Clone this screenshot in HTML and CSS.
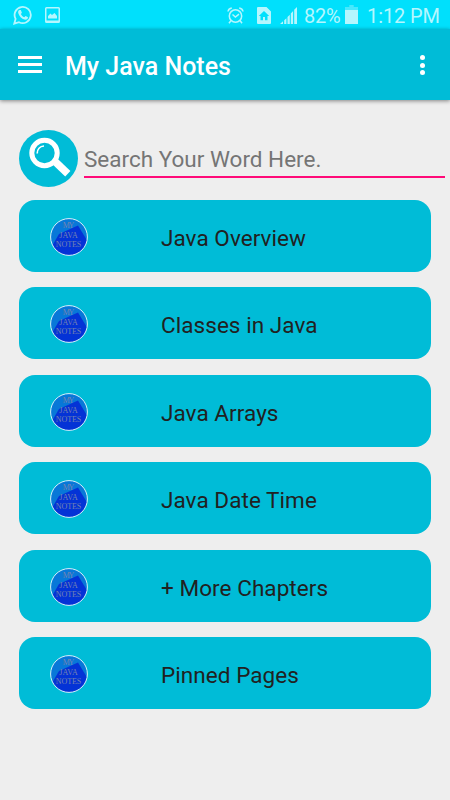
FILE: index.html
```html
<!DOCTYPE html>
<html lang="en">
<head>
  <meta charset="UTF-8" />
  <meta name="viewport" content="width=device-width, initial-scale=1.0" />
  <title>My Java Notes</title>
  <link rel="stylesheet" href="styles.css">
</head>
<body>

  <!-- Shared logo -->
  <svg width="0" height="0" class="defs">
    <defs>
      <clipPath id="logoClip"><circle cx="19" cy="19" r="18.3" /></clipPath>
      <symbol id="logo" viewBox="0 0 38 38">
        <g clip-path="url(#logoClip)">
          <rect width="38" height="38" fill="#0878d8" />
          <path d="M2 28 L9 16 L28 7.5 L38 24 V38 H2 Z" fill="#0433d6" />
        </g>
        <circle cx="19" cy="19" r="18.4" fill="none" stroke="#d5eefa" stroke-width="1" />
        <g class="logoText">
          <text x="18.5" y="10" font-size="8" textLength="11.5">MY</text>
          <text x="18.5" y="19.6" font-size="8" textLength="18.5">JAVA</text>
          <text x="18.5" y="28.8" font-size="8" textLength="25.5">NOTES</text>
        </g>
      </symbol>
    </defs>
  </svg>

  <!-- Status bar -->
  <div class="statusBar">
    <svg class="whatsapp" width="20" height="20" viewBox="0 0 20 20" fill="none" stroke="currentColor">
      <path d="M1.3 18.6 L2.6 13.9 A8.1 8.1 0 1 1 6 17.2 Z" stroke-width="1.8" />
      <path d="M6.5 5 C5.1 5.6 4.8 7.2 5.5 8.8 C6.6 11.7 8.7 13.7 11.4 14.6 C13.3 15.2 15 14.1 15 12.3 L12.6 11 L11.2 12.3 C9.7 11.7 8.5 10.5 7.9 9.1 L8.9 7.8 L7.8 5 Z" fill="currentColor" stroke="none" />
    </svg>
    <svg class="picture" width="15" height="16" viewBox="0 0 15 16">
      <path d="M1.5 0 H13.5 Q15 0 15 1.5 V14.5 Q15 16 13.5 16 H1.5 Q0 16 0 14.5 V1.5 Q0 0 1.5 0 Z M1.5 1.5 V13.5 H13.5 V1.5 Z" fill="currentColor" fill-rule="evenodd" />
      <path d="M3 11.5 V9 L5.5 6.5 L7 8 L9.5 6 L12 9 V11.5 Z" fill="currentColor" />
    </svg>
    <svg class="alarm" width="17" height="17" viewBox="0 0 17 17" fill="none" stroke="currentColor" stroke-width="1.5">
      <circle cx="8.5" cy="9" r="6.2" />
      <path d="M5.5 7.5 L8.4 10 L12 7.2 M1 4.5 Q1.5 1.5 4.8 1 M16 4.5 Q15.5 1.5 12.2 1 M4 13.5 L2 16.3 M13 13.5 L15 16.3" />
    </svg>
    <svg class="sim" width="14" height="17" viewBox="0 0 14 17">
      <path d="M1 0 H9.5 L14 4.5 V16 Q14 17 13 17 H1 Q0 17 0 16 V1 Q0 0 1 0 Z M7 4 L1.8 9 H3.5 V13.2 H6 V10 H8 V13.2 H10.5 V9 H12.2 Z" fill="currentColor" fill-rule="evenodd" />
    </svg>
    <svg class="signal" width="17" height="17" viewBox="0 0 17 17" fill="currentColor">
      <path d="M0 17 L3 14.3 V17 Z M4.2 13.2 L6.4 11.2 V17 H4.2 Z M7.5 10 L9.8 7.7 V17 H7.5 Z M10.8 6.4 L13.1 4.1 V17 H10.8 Z M14.2 2.8 L17 0 V17 H14.2 Z" />
    </svg>
    <span class="percent">82%</span>
    <svg class="battery" width="13" height="19" viewBox="0 0 13 19" fill="currentColor">
      <path d="M4.3 0 H8.7 V2 H13 V5 H0 V2 H4.3 Z" opacity=".4" />
      <rect y="5" width="13" height="14" />
    </svg>
    <span class="clock">1:12 PM</span>
  </div>

  <!-- App bar -->
  <div class="appBar">
    <div class="menuIcon"><i></i><i></i><i></i></div>
    <h1>My Java Notes</h1>
    <div class="dots"><i></i><i></i><i></i></div>
  </div>

  <!-- Search -->
  <div class="search">
    <svg class="searchIcon" width="59" height="57" viewBox="0 0 59 57">
      <ellipse cx="29.5" cy="28.5" rx="29.5" ry="28.5" fill="#00bcd7" />
      <path d="M36 31.5 L48.8 43.8" stroke="#fff" stroke-width="7.5" />
      <circle cx="25.5" cy="23" r="12.7" fill="none" stroke="#fff" stroke-width="5" />
      <path d="M18.2 23.5 C18.2 19.2 21 16.3 25 16" fill="none" stroke="#fff" stroke-width="1.7" />
    </svg>
    <div class="searchField">Search Your Word Here.</div>
  </div>

  <!-- Chapters -->
  <div class="list">
    <div class="item"><svg class="logo"><use href="#logo" /></svg><span>Java Overview</span></div>
    <div class="item"><svg class="logo"><use href="#logo" /></svg><span>Classes in Java</span></div>
    <div class="item"><svg class="logo"><use href="#logo" /></svg><span>Java Arrays</span></div>
    <div class="item"><svg class="logo"><use href="#logo" /></svg><span>Java Date Time</span></div>
    <div class="item"><svg class="logo"><use href="#logo" /></svg><span>+ More Chapters</span></div>
    <div class="item"><svg class="logo"><use href="#logo" /></svg><span>Pinned Pages</span></div>
  </div>

</body>
</html>
```

FILE: styles.css
```css
* {
  box-sizing: border-box;
}

body {
  margin: 0;
  height: 800px;
  overflow: hidden;
  background: #eeeeee;
  font-family: Roboto, sans-serif;
}

svg {
  display: block;
  flex: none;
}

.defs {
  position: absolute;
}

.statusBar {
  display: flex;
  align-items: flex-start;
  height: 29px;
  background: #00e0fc;
  color: #b5f6fe;
  font-size: 20px;
  line-height: 24px;
  white-space: nowrap;
}

.whatsapp { margin: 5px 0 0 13px; }
.picture { margin: 7px 0 0 12px; }
.alarm { margin: 7px 0 0 167px; }
.sim { margin: 7px 0 0 13px; }
.signal { margin: 7px 0 0 9px; }
.battery { margin: 5px 0 0 auto; }

.percent {
  margin: 4px 0 0 7px;
  width: 37px;
  letter-spacing: -0.2px;
}

.clock {
  margin: 4px 0 0 9px;
  width: 83px;
  letter-spacing: -0.1px;
}

.appBar {
  display: flex;
  align-items: center;
  height: 71px;
  padding: 2px 25px 0 18px;
  background: #00bcd7;
  box-shadow: 0 1px 4px rgba(0, 0, 0, 0.45);
}

.menuIcon {
  display: flex;
  flex-direction: column;
  gap: 4px;
  width: 24px;
  margin-top: -2px;
}

.menuIcon i {
  height: 3px;
  background: #fff;
}

.appBar h1 {
  flex: 1;
  margin: 2px 0 0 23px;
  color: #fff;
  font-size: 25px;
  font-weight: 500;
  line-height: 30px;
}

.dots {
  display: flex;
  flex-direction: column;
  gap: 2.5px;
  margin-top: -1px;
}

.dots i {
  width: 5px;
  height: 5px;
  border-radius: 50%;
  background: #fff;
}

.search {
  display: flex;
  padding: 30px 5px 0 19px;
}

.searchField {
  flex: 1;
  height: 48px;
  margin-left: 6px;
  padding-top: 14px;
  border-bottom: 2px solid #ff0a78;
  color: #757575;
  font-size: 22.5px;
  line-height: 30px;
}

.list {
  display: flex;
  flex-direction: column;
  gap: 15.5px;
  padding: 12.5px 19px 0;
}

.item {
  display: flex;
  align-items: center;
  height: 72px;
  padding-left: 31px;
  border-radius: 16px;
  background: #00bcd7;
  color: #212121;
  font-size: 22.5px;
  letter-spacing: 0.06px;
}

.item span {
  margin: 4px 0 0 73px;
}

.logo {
  width: 38px;
  height: 38px;
  margin-top: 2px;
}

.logoText {
  fill: #7482b0;
  font-family: "Liberation Serif", serif;
  letter-spacing: 0;
  text-anchor: middle;
}
```
